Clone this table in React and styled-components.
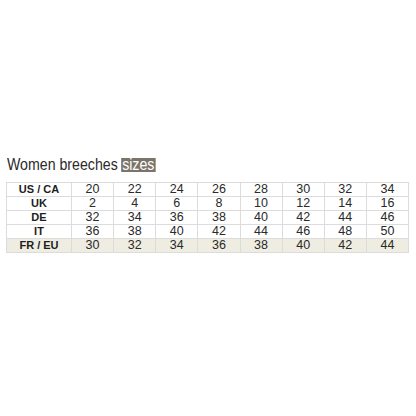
import React from "react";
import styled, { createGlobalStyle } from "styled-components";

const Global = createGlobalStyle`
  html, body { margin: 0; padding: 0; background: #fff; }
  body { width: 416px; height: 416px; overflow: hidden; }
`;

const Page = styled.div`
  padding: 157px 7px 0 6px;
  font-family: "Liberation Sans", Arial, sans-serif;
  color: #222;
`;

const Title = styled.h2`
  margin: 0 0 10px 1px;
  font-family: "Liberation Sans", Arial, sans-serif;
  font-weight: normal;
  font-size: 16px;
  line-height: 15px;
  color: #2a2a2a;
  display: flex;
  align-items: center;
  gap: 4px;
  transform: scaleX(0.885);
  transform-origin: left center;
`;

const Highlight = styled.span`
  background: #7b7468;
  color: #fff;
  padding: 0 1px;
  line-height: 14px;
  height: 14px;
  display: inline-block;
`;

const Table = styled.table`
  width: 403px;
  border-collapse: collapse;
  table-layout: fixed;
  border: 1px solid #d8d8d8;
`;

const Row = styled.tr`
  background: ${(p) => (p.$accent ? "#efece1" : "#fff")};
`;

const Head = styled.th`
  width: 64px;
  height: 13px;
  padding: 0;
  border: 1px solid #dcdcdc;
  font-size: 11px;
  font-weight: bold;
  line-height: 13px;
  text-align: center;
  color: #1e1e1e;
`;

const Cell = styled.td`
  height: 13px;
  padding: 0;
  border: 1px solid #dcdcdc;
  font-size: 12.5px;
  line-height: 13px;
  text-align: center;
  color: #2a2a2a;
`;

const rows = [
  ["US / CA", [20, 22, 24, 26, 28, 30, 32, 34]],
  ["UK", [2, 4, 6, 8, 10, 12, 14, 16]],
  ["DE", [32, 34, 36, 38, 40, 42, 44, 46]],
  ["IT", [36, 38, 40, 42, 44, 46, 48, 50]],
  ["FR / EU", [30, 32, 34, 36, 38, 40, 42, 44]],
];

export default function App() {
  return (
    <>
      <Global />
      <Page>
        <Title>
          Women breeches <Highlight>sizes</Highlight>
        </Title>
        <Table>
          <tbody>
            {rows.map(([label, vals], i) => (
              <Row key={label} $accent={i === rows.length - 1}>
                <Head>{label}</Head>
                {vals.map((v, j) => (
                  <Cell key={j}>{v}</Cell>
                ))}
              </Row>
            ))}
          </tbody>
        </Table>
      </Page>
    </>
  );
}
